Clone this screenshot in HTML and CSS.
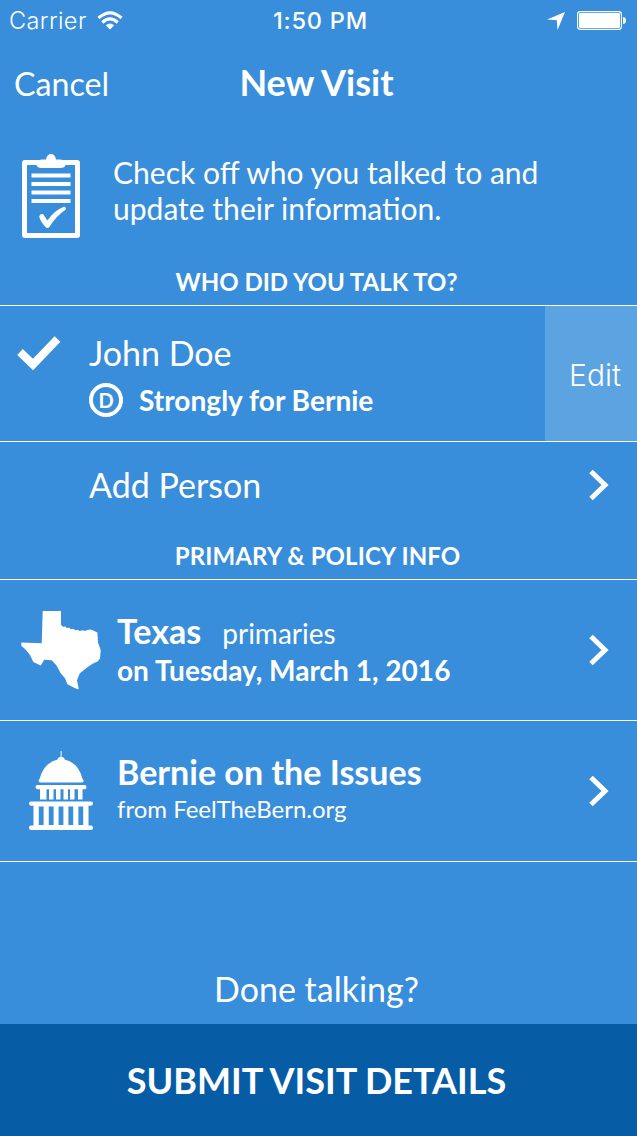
FILE: index.html
```html
<!DOCTYPE html>
<html lang="en">
<head>
<meta charset="utf-8">
<title>New Visit</title>
<link rel="stylesheet" href="styles.css">
</head>
<body>
<div class="screen">
  <div class="status">
    <div class="status-left"><span class="carrier">Carrier</span>
      <svg class="wifi" viewBox="0 0 26 19"><g fill="none" stroke="#fff" stroke-width="3.2"><path d="M1.5 7Q13-3.2 24.500 7"/><path d="M5.300 11.500Q13 4.300 20.700 11.500"/></g><path fill="#fff" d="M8.800 14.300Q13 10.800 17.200 14.300L13 18.600Z"/></svg>
    </div>
    <span class="time">1:50 PM</span>
    <div class="status-right">
      <svg class="locate" viewBox="0 0 18 18"><path fill="#fff" d="M18 0 10.500 18 9.800 8.200 0 7.500Z"/></svg>
      <svg class="battery" viewBox="0 0 50 19"><rect x=".6" y=".6" width="43.800" height="17.800" rx="2.600" fill="none" stroke="#fff" stroke-width="1.100"/><rect x="2" y="2" width="41" height="15" rx="1.200" fill="#fff"/><path fill="#fff" d="M46 6q3 .3 3 3.500t-3 3.500z"/></svg>
    </div>
  </div>
  <header class="nav"><span class="cancel">Cancel</span><h1 class="title">New Visit</h1></header>
  <section class="intro">
    <svg class="clipboard" viewBox="0 0 60 86"><rect x="2.500" y="8.500" width="53" height="73" rx=".5" fill="none" stroke="#fff" stroke-width="5"/><path fill="#fff" d="M14.500 9.500q1-4 6-4H24Q25 0 29 0t5 5.500h3.500q5 0 6 4 .5 4.500-5.500 4.500H20q-6 0-5.500-4.500z"/><path stroke="#fff" stroke-width="4" d="M9.500 21.500h39M9.500 30h39M9.500 38.500h39M9.500 47h39"/><path fill="#fff" d="M17.200 62.500q.8-3 4-2.300l4.300 6.300Q32 56.500 42 52.700q2.700.3 1.600 3Q34 62 27.700 72.500q-2.200 3-4.600 0-5-5.500-5.900-10z"/></svg>
    <p class="intro-text">Check off who you talked to and<br>update their information.</p>
  </section>
  <h2 class="heading">WHO DID YOU TALK TO?</h2>
  <div class="row person">
    <svg class="check" viewBox="0 0 44 35"><path fill="none" stroke="#fff" stroke-width="8" d="M3 16 16 28.500 40.500 3"/></svg>
    <div class="person-body">
      <div class="name">John Doe</div>
      <div class="support"><span class="party">D</span><span class="stance">Strongly for Bernie</span></div>
    </div>
    <div class="edit">Edit</div>
  </div>
  <div class="row add">
    <div class="name add-name">Add Person</div>
    <svg class="chevron" viewBox="0 0 20 32"><path d="M2 2.500 16 16 2 29.500"/></svg>
  </div>
  <h2 class="heading heading-info">PRIMARY &amp; POLICY INFO</h2>
  <div class="row info">
    <svg class="texas" viewBox="0 0 80 80"><path fill="#fff" d="M21.700 1H40v14l2.500 2 1.500-.7 1.700 1.700 2.500-.3 1.500 1.500 2.600-.4 1.800 1.500 2.500-.5 2 1.200 3.400-.7 2.200.8 2-1.200 3.500-.3 2.500.8 4.200 2 .6 10 2.700 7.700-.7 8.300-2.500 3-4.500 2.200-6 4-7.300 6-2.700 6.700 1.700 8.300-1 .7-4-1.700-6.300-3.300L44 68.300l-4.300-5-4-7.600-5-5.400-7.400-.6-3.600 5.800-7.400-3.600L9 45l-4-5L.3 35.700v-3.200l20.400.8z"/></svg>
    <div class="info-body">
      <div class="lead"><span class="strong">Texas</span><span class="primaries">primaries</span></div>
      <div class="date">on Tuesday, March 1, 2016</div>
    </div>
    <svg class="chevron" viewBox="0 0 20 32"><path d="M2 2.500 16 16 2 29.500"/></svg>
  </div>
  <div class="row info last">
    <svg class="capitol" viewBox="0 0 64 80"><path fill="#fff" d="M31.600 0h1v6q3 .2 3 2.500 14 3.500 17.500 18.500l1.800 3-1.500 1.500H10.900L9.400 30l1.500-3Q14.900 12 28.600 8.500q0-2.300 3-2.500zM8.500 34h47q2 0 2 2.200T55.500 38.200h-2v10.300H49V38.200h-3.500v10.300H41V38.200h-2v10.300h-4.500V38.200h-3v10.300H27V38.200h-2.500v10.300H20V38.200h-2.500v10.300H11V38.200H8.500q-2-.3-2-2.200T8.500 34z"/><path fill="#fff" d="M2 50.500h60q2 0 2 2.100t-2 2.100h-2.500V74.500H62q2 0 2 2.200T62 79H2q-2 0-2-2.300t2-2.200h2.500V54.700H2q-2-.2-2-2.100t2-2.100z"/><path class="gap" d="M12.200 55.500V74M22.200 55.500V74M32 55.500V74M41.800 55.500V74M51.800 55.500V74"/></svg>
    <div class="info-body">
      <div class="strong issues">Bernie on the Issues</div>
      <div class="source">from FeelTheBern.org</div>
    </div>
    <svg class="chevron" viewBox="0 0 20 32"><path d="M2 2.500 16 16 2 29.500"/></svg>
  </div>
  <footer class="footer"><div class="done">Done talking?</div><div class="submit">SUBMIT VISIT DETAILS</div></footer>
</div>
</body>
</html>
```

FILE: styles.css
```css
* { box-sizing: border-box; }
body, h1, h2, p { margin: 0; }
body { background: #388eda; color: #fff; font-family: Lato, sans-serif; }
svg { display: block; flex: none; }
.screen { width: 637px; height: 1136px; display: flex; flex-direction: column; overflow: hidden; white-space: nowrap; }
.status { height: 40px; display: grid; grid-template-columns: 1fr auto 1fr; padding: 1px 10px 0 9px; font: 23.5px/40px Inter, sans-serif; }
.status-left { display: flex; gap: 10px; }
.carrier { font-weight: 300; letter-spacing: .4px; }
.wifi { width: 26px; height: 19px; margin-top: 9.500px; }
.time { font-weight: 500; letter-spacing: .8px; padding-left: 5px; }
.status-right { display: flex; justify-content: flex-end; }
.locate { width: 18px; height: 18px; margin: 11px 12px 0 0; }
.battery { width: 50px; height: 19px; margin-top: 10px; }
.nav { height: 88px; display: grid; grid-template-columns: 1fr auto 1fr; padding: 0 18px 0 14px; line-height: 44px; }
.cancel { font-size: 32.200px; padding-top: 22px; }
.title { font-size: 36px; font-weight: 700; line-height: 44px; padding-top: 20px; }
.intro { height: 137px; display: flex; padding: 26px 0 0 22px; }
.clipboard { width: 60px; height: 86px; margin-right: 31px; }
.intro-text { font-size: 30.040px; line-height: 36px; }
.heading { height: 40px; font-size: 24px; line-height: 34px; font-weight: 700; text-align: center; flex: none; padding-right: 4px; }
.heading-info { letter-spacing: .1px; padding-right: 2px; }
.row { display: flex; flex: none; border-top: 1px solid #fff; }
.person { height: 136px; }
.check { width: 44px; height: 35px; margin: 30px 28px 0 17px; }
.person-body { flex: 1; padding-top: 27px; }
.name { font-size: 34px; line-height: 40px; }
.support { display: flex; align-items: center; height: 34px; margin-top: 10px; }
.party { width: 34px; height: 34px; border: 4px solid #fff; border-radius: 50%; font-size: 20px; font-weight: 700; line-height: 26px; text-align: center; margin-right: 16px; }
.stance { font-size: 28.100px; line-height: 34px; font-weight: 700; }
.edit { width: 92px; padding-left: 8px; background: #5ba4e1; font: 300 30px/138px Inter, sans-serif; height: 135px; text-align: center; }
.add { height: 98px; padding: 0 28px 0 89px; justify-content: space-between; }
.add-name { padding-top: 23px; }
.chevron { width: 20px; height: 32px; fill: none; stroke: #fff; stroke-width: 5; }
.add .chevron { margin-top: 27px; }
.info { height: 141px; padding: 0 28px 0 0; }
.last { height: 142px; border-bottom: 1px solid #fff; }
.texas { width: 80px; height: 80px; margin: 30px 16px 0 21px; }
.capitol { width: 64px; height: 80px; margin: 30px 24px 0 29px; }
.gap { stroke: #388eda; stroke-width: 4.800; }
.info-body { flex: 1; padding-top: 31px; }
.info .chevron { margin-top: 54px; }
.lead { display: flex; align-items: baseline; height: 41px; }
.lead, .issues { line-height: 40px; }
.strong { font-size: 34.050px; font-weight: 700; }
.primaries { font-size: 28px; margin-left: 21px; }
.date { font-size: 28.050px; line-height: 36px; font-weight: 700; }
.source { font-size: 24px; line-height: 34px; }
.footer { margin-top: auto; text-align: center; }
.done { font-size: 34px; line-height: 40px; height: 55px; padding-right: 4px; }
.submit { height: 112px; padding-right: 4px; background: #065da5; font-size: 36px; font-weight: 700; line-height: 112px; }
```
